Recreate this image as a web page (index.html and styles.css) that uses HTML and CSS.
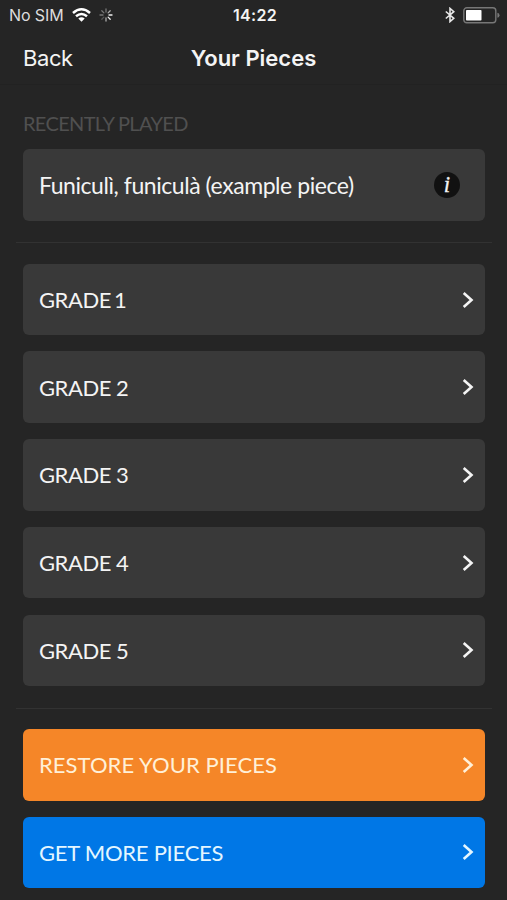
FILE: index.html
```
<!DOCTYPE html>
<html lang="en">
<head>
<meta charset="utf-8">
<title>Your Pieces</title>
<link rel="stylesheet" href="styles.css">
</head>
<body>
<div class="status">
  <span class="carrier">No SIM</span>
  <svg class="wifi" width="19" height="14" viewBox="0 0 19 14"><g fill="none" stroke="#fff" stroke-width="2.5"><path d="M1 5Q9.500-2.400 18 5"/><path d="M4 8.300Q9.500 3.600 15 8.300"/></g><path d="M6.300 10.500Q9.500 7.800 12.700 10.500L9.500 13.700Z" fill="#fff"/></svg>
  <svg class="spinner" width="14" height="14" viewBox="-7 -7 14 14" stroke-width="1.300" stroke-linecap="round"><g stroke="#777"><path d="M0-3V-6"/><path d="M-2.100-2.100L-4.200-4.200"/><path d="M-3 0H-6"/><path d="M-2.100 2.100L-4.200 4.200" stroke="#555"/></g><g stroke="#aaa"><path d="M2.100-2.100L4.200-4.200"/><path d="M0 3V6"/></g><g stroke="#eee"><path d="M3 0H6"/><path d="M2.100 2.100L4.200 4.200"/></g></svg>
  <span class="time">14:22</span>
  <svg class="bluetooth" width="10" height="16" viewBox="0 0 10 16"><path d="M.8 4.500L8.800 11.300L5 14.600V1.400L8.800 4.700L.8 11.500" fill="none" stroke="#e8e8e8" stroke-width="1.600"/></svg>
  <svg class="battery" width="37" height="17" viewBox="0 0 37 17"><rect x=".8" y=".8" width="32" height="15" rx="3" fill="none" stroke="#777" stroke-width="1.400"/><rect x="3" y="3" width="15.500" height="10.600" rx=".8" fill="#fff"/><path d="M34.400 5.800Q36.500 6 36.500 8.300T34.400 10.800Z" fill="#777"/></svg>
</div>
<header class="nav"><a class="back"><span>Back</span></a><h1><span>Your Pieces</span></h1></header>
<main>
  <h2><span class="recent">RECENTLY PLAYED</span></h2>
  <div class="card"><span class="piece">Funiculì, funiculà (example piece)</span><span class="info">i</span></div>
  <hr>
  <div class="list">
    <div class="card"><span class="grade first">GRADE 1</span><svg class="chevron" viewBox="0 0 12 18"><path d="M1.700 2L9.500 9L1.700 16"/></svg></div>
    <div class="card"><span class="grade">GRADE 2</span><svg class="chevron" viewBox="0 0 12 18"><path d="M1.700 2L9.500 9L1.700 16"/></svg></div>
    <div class="card"><span class="grade">GRADE 3</span><svg class="chevron" viewBox="0 0 12 18"><path d="M1.700 2L9.500 9L1.700 16"/></svg></div>
    <div class="card"><span class="grade">GRADE 4</span><svg class="chevron" viewBox="0 0 12 18"><path d="M1.700 2L9.500 9L1.700 16"/></svg></div>
    <div class="card"><span class="grade">GRADE 5</span><svg class="chevron" viewBox="0 0 12 18"><path d="M1.700 2L9.500 9L1.700 16"/></svg></div>
  </div>
  <hr>
  <div class="list">
    <div class="card orange"><span class="restore">RESTORE YOUR PIECES</span><svg class="chevron" viewBox="0 0 12 18"><path d="M1.700 2L9.500 9L1.700 16"/></svg></div>
    <div class="card blue"><span class="more">GET MORE PIECES</span><svg class="chevron" viewBox="0 0 12 18"><path d="M1.700 2L9.500 9L1.700 16"/></svg></div>
  </div>
</main>
</body>
</html>
```
FILE: styles.css
```
* { box-sizing: border-box; }
body {
  margin: 0;
  height: 900px;
  overflow: hidden;
  background: #252525;
  color: #f4f4f4;
  font-family: Lato, sans-serif;
}
.status {
  display: flex;
  align-items: center;
  height: 30px;
  padding: 0 8px 0 9px;
  font: 400 16px/30px Inter, sans-serif;
}
.carrier { width: 63px; letter-spacing: -.1px; color: #ddd; white-space: nowrap; }
.wifi { margin-right: 8px; }
.time { margin-left: 120px; font-weight: 600; letter-spacing: .3px; }
.bluetooth { margin-left: auto; margin-right: 8px; }
.battery { margin-right: -1px; }
.nav {
  display: grid;
  grid-template-columns: 1fr auto 1fr;
  align-items: center;
  height: 55px;
  padding: 1px 22px 0;
  border-bottom: 1px solid #222;
  font-family: Inter, sans-serif;
}
.back { font-size: 22px; letter-spacing: -.4px; padding-left: 1px; }
h1 { margin: 0; font-size: 22px; font-weight: 600; }
main { padding: 0 22px 0 23px; }
h2 {
  margin: 0;
  height: 64.300px;
  padding-top: 26px;
  font-size: 20px;
  font-weight: 400;
  line-height: 24px;
  letter-spacing: -.66px;
  color: #505050;
}
.card {
  display: flex;
  align-items: center;
  justify-content: space-between;
  height: 71.500px;
  width: 462px;
  padding: 0 11px 0 16px;
  border-radius: 6px;
  background: #393939;
  font-size: 22px;
  white-space: nowrap;
}
.list { display: grid; gap: 16.200px; }
.piece { font-size: 23px; letter-spacing: -.44px; }
.grade { letter-spacing: -.45px; }
.first { word-spacing: -2px; }
.restore { letter-spacing: .06px; }
.more { letter-spacing: -.25px; }
.orange { background: #f58628; color: #fff0d8; }
.blue { background: #0077e6; color: #e4f6ff; }
hr { height: 1px; margin: 21.500px -7px 20.500px; border: 0; background: #323232; }
.chevron { width: 12px; height: 18px; fill: none; stroke: currentColor; stroke-width: 2.600; }
.info {
  display: grid;
  place-items: center;
  width: 26px;
  height: 26px;
  margin-right: 14px;
  border-radius: 50%;
  background: #111;
  font: italic 400 23px/26px "Liberation Serif", serif;
  -webkit-text-stroke: .3px currentColor;
}
```
